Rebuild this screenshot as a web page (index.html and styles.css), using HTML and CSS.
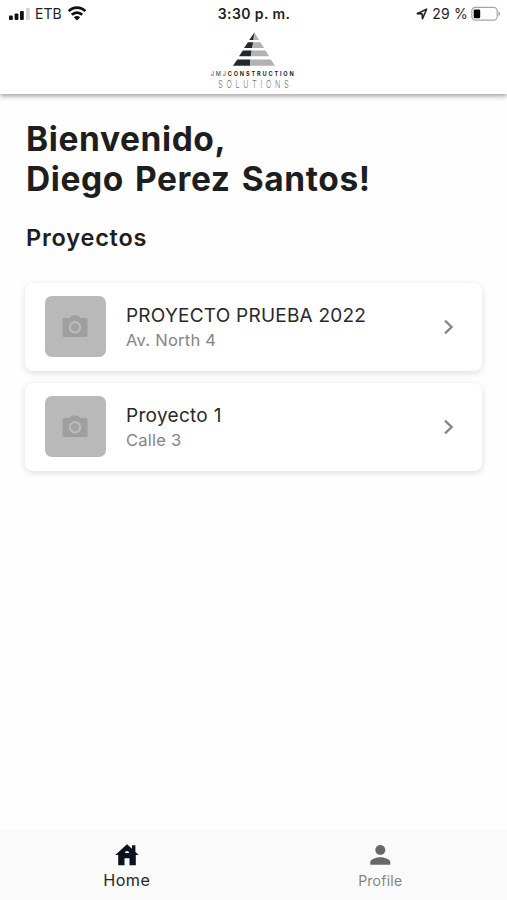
FILE: index.html
```
<!DOCTYPE html>
<html lang="es">
<head>
<meta charset="utf-8">
<title>Proyectos</title>
<link rel="stylesheet" href="styles.css">
</head>
<body>
<div class="app">
  <header class="header">
    <div class="status">
      <div class="status-left">
        <svg width="21" height="14" viewBox="0 0 21 14"><g fill="#111"><rect x="0" y="8.6" width="3.8" height="4.4" rx="1"/><rect x="5.6" y="6.6" width="3.8" height="6.4" rx="1"/><rect x="11" y="4" width="3.8" height="9" rx="1"/></g><rect x="17" y="1" width="3.8" height="12" rx="1" fill="#d3d3d3"/></svg>
        <span class="carrier">ETB</span>
        <svg class="wifi" width="20" height="16" viewBox="0 0 20 16"><g fill="none" stroke="#111" stroke-width="2.7"><path d="M1.7 6.2C6.3 1.3 13.7 1.3 18.3 6.2"/><path d="M4.8 9.800c3-3 7.400-3 10.400 0"/></g><path d="M6.800 12.300c1.900-1.700 4.500-1.700 6.400 0L10 15.500z" fill="#111"/></svg>
      </div>
      <div class="time">3:30 p. m.</div>
      <div class="status-right">
        <svg width="12" height="12" viewBox="0 0 12 12"><path d="M1.200 5.600L10.600 1.200 6.500 10.800 6.100 5.900z" fill="none" stroke="#222" stroke-width="1.6" stroke-linejoin="round"/></svg>
        <span class="percent">29 %</span>
        <svg width="30" height="16" viewBox="0 0 30 16"><rect x=".8" y="1.400" width="25.400" height="12.800" rx="3.600" fill="none" stroke="#a5a5a5" stroke-width="1.200"/><rect x="2.700" y="3.400" width="6.500" height="8.800" rx="1.300" fill="#000"/><path d="M27.400 5.500c2.500.8 2.500 3.800 0 4.600z" fill="#aaa"/></svg>
      </div>
    </div>
    <div class="brand">
      <svg width="44" height="36" viewBox="0 0 44 36">
        <g fill="#23272e"><path d="M22.500.2V8H17.200z"/><path d="M15.900 10.200h5.300L20.200 16h-8.100z"/><path d="M10.800 18.600h9l-1 5.700H7z"/><path d="M5.300 27.400h13.200l-.4 6.400H1z"/></g>
        <g fill="#b0b2b3"><path d="M22.200.2L27.100 8H21.200z"/><path d="M21.200 10.200h7.200l3.700 5.800H20.200z"/><path d="M19.800 18.600h13.800l3.500 5.700H18.800z"/><path d="M18.500 27.400h20.400l4.100 6.400H18.100z"/></g>
      </svg>
      <div class="brand-name"><span class="brand-thin">JMJ</span>CONSTRUCTION</div>
      <div class="brand-sub">SOLUTIONS</div>
    </div>
  </header>
  <main class="content">
    <h1 class="welcome">Bienvenido,<br>Diego Perez Santos!</h1>
    <h2 class="section-title">Proyectos</h2>
    <div class="projects">
      <article class="card">
        <div class="thumb"><svg width="26" height="23" viewBox="0 0 26 23"><path d="M2 3h5.800L10 .6h6L18.200 3H24a1.500 1.500 0 0 1 1.500 1.500v16A1.500 1.500 0 0 1 24 22H2a1.500 1.500 0 0 1-1.500-1.500v-16A1.500 1.500 0 0 1 2 3z" fill="#9f9f9f"/><circle cx="13" cy="12.300" r="5.200" fill="#a3a3a3" stroke="#bcbcbc" stroke-width="2"/></svg></div>
        <div class="card-text"><div class="card-title upper">PROYECTO PRUEBA 2022</div><div class="card-sub">Av. North 4</div></div>
        <svg class="chevron" width="12" height="16" viewBox="0 0 12 16"><path d="M2 1.700L8.600 8 2 14.300" fill="none" stroke="#858585" stroke-width="2.300"/></svg>
      </article>
      <article class="card">
        <div class="thumb"><svg width="26" height="23" viewBox="0 0 26 23"><path d="M2 3h5.800L10 .6h6L18.200 3H24a1.500 1.500 0 0 1 1.500 1.500v16A1.500 1.500 0 0 1 24 22H2a1.500 1.500 0 0 1-1.500-1.500v-16A1.500 1.500 0 0 1 2 3z" fill="#9f9f9f"/><circle cx="13" cy="12.300" r="5.200" fill="#a3a3a3" stroke="#bcbcbc" stroke-width="2"/></svg></div>
        <div class="card-text"><div class="card-title">Proyecto 1</div><div class="card-sub">Calle 3</div></div>
        <svg class="chevron" width="12" height="16" viewBox="0 0 12 16"><path d="M2 1.700L8.600 8 2 14.300" fill="none" stroke="#858585" stroke-width="2.300"/></svg>
      </article>
    </div>
  </main>
  <nav class="tabs">
    <div class="tab active">
      <svg width="24" height="22" viewBox="0 0 24 22"><path fill="#0b1320" fill-rule="evenodd" d="M12 .3l5 4.500V1.300h3.400v6.600l3.300 3.200H20.800V21.200h-6.300v-7h-5v7H3.200v-10.100H.3zM9.900 9h4.200a2.100 2.100 0 0 0-4.200 0z"/></svg>
      <span class="tab-label">Home</span>
    </div>
    <div class="tab">
      <svg width="24" height="22" viewBox="0 0 24 22"><circle cx="12.300" cy="6" r="5" fill="#686868"/><path d="M2.300 20.800v-2.500c0-3.300 6.600-5 10-5s10 1.700 10 5v2.500z" fill="#686868"/></svg>
      <span class="tab-label">Profile</span>
    </div>
  </nav>
</div>
</body>
</html>
```

FILE: styles.css
```
* { box-sizing: border-box; }
body { margin: 0; background: #fefefe; font-family: Inter, "Liberation Sans", sans-serif; color: #1e1e1f; }
svg { display: block; flex: none; }
.app { height: 900px; display: flex; flex-direction: column; overflow: hidden; }
.header { height: 94px; flex: none; background: #fff; box-shadow: 0 2px 5px rgba(0,0,0,.38); }
.status { height: 28px; padding: 0 6px 0 9px; display: grid; grid-template-columns: 1fr auto 1fr; align-items: center; font-size: 14px; line-height: 28px; }
.status-left, .status-right { display: flex; align-items: center; }
.status-right { justify-content: flex-end; }
.carrier { margin-left: 5px; }
.wifi { margin-left: 5px; margin-top: -2px; }
.time { font-weight: 600; letter-spacing: .4px; margin-right: 2px; }
.percent { margin: 0 3px 0 4px; letter-spacing: .2px; }
.brand { display: flex; flex-direction: column; align-items: center; padding-top: 4px; }
.brand-name { margin-top: 2px; font-size: 6.200px; line-height: 8px; font-weight: 700; letter-spacing: 2.050px; transform: scaleX(.9); white-space: nowrap; }
.brand-thin { font-weight: 500; color: #555; }
.brand-sub { margin-top: 1px; font-size: 10.500px; line-height: 11px; font-weight: 300; letter-spacing: 5.600px; color: #757575; transform: translateX(2px) scaleX(.67); white-space: nowrap; }
.content { flex: 1; padding: 25px 25px 0; }
.welcome { margin: 0 0 0 1px; font-size: 33.500px; line-height: 40.400px; font-weight: 650; letter-spacing: .6px; word-spacing: 2.500px; white-space: nowrap; }
.section-title { margin: 24px 0 0 1px; font-size: 23.500px; line-height: 28px; font-weight: 630; letter-spacing: .800px; }
.projects { margin-top: 31px; display: flex; flex-direction: column; gap: 12px; }
.card { height: 88px; display: flex; align-items: center; padding: 0 27px 0 20px; background: #fff; border-radius: 8px; box-shadow: 0 2px 7px rgba(0,0,0,.13); }
.thumb { width: 61px; height: 61px; border-radius: 7px; background: #b9b9b9; display: flex; align-items: center; justify-content: center; padding: 0 1px 1px 0; }
.card-text { flex: 1; margin-left: 20px; padding-top: 2px; }
.card-title { font-size: 19px; line-height: 25px; letter-spacing: .3px; color: #29292a; }
.upper { letter-spacing: .23px; }
.card-sub { font-size: 16.500px; line-height: 25px; letter-spacing: .25px; color: #858585; }
.tabs { height: 71px; flex: none; display: flex; background: #fafafa; }
.tab { flex: 1; display: flex; flex-direction: column; align-items: center; padding-top: 15px; font-size: 14px; letter-spacing: .25px; color: #858585; }
.tab-label { margin-top: 5px; line-height: 20px; }
.active { font-size: 16.200px; letter-spacing: .4px; color: #24272d; }
.active .tab-label { margin-top: 4px; }
```
